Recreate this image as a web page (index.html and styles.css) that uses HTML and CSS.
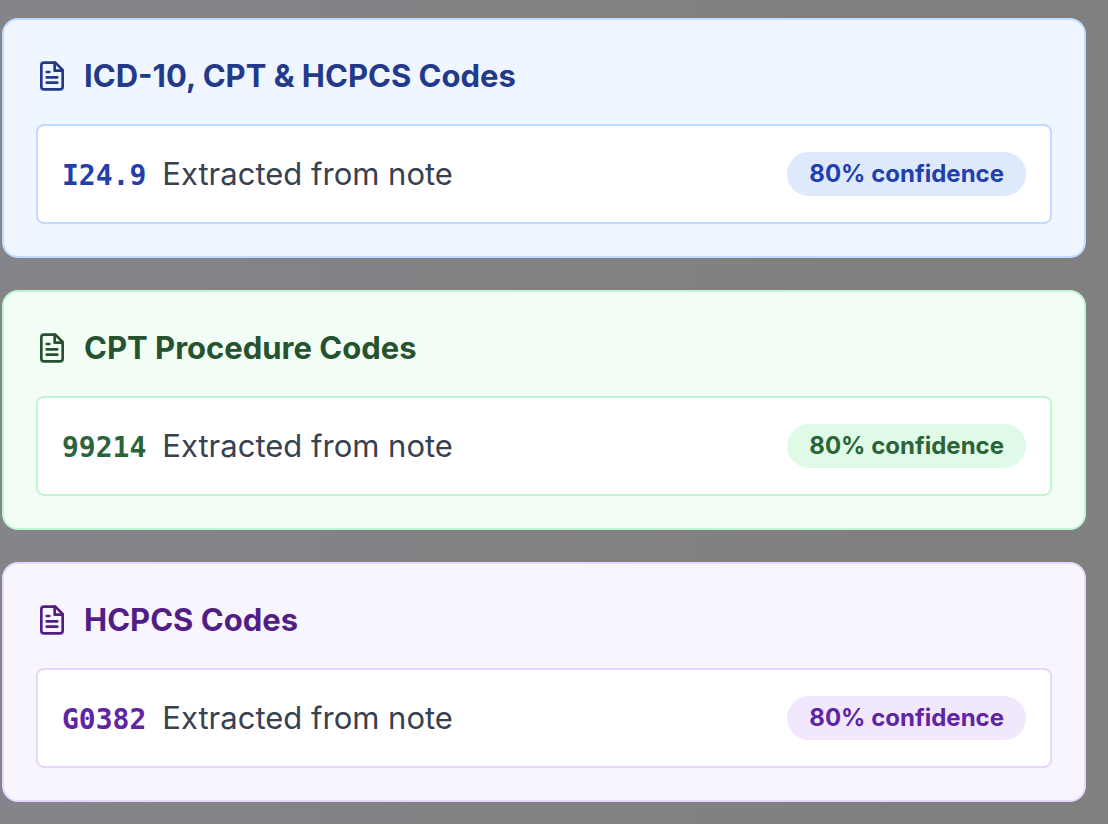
FILE: index.html
```html
<!DOCTYPE html>
<html lang="en">
<head>
<meta charset="utf-8">
<title>Medical Codes</title>
<link rel="stylesheet" href="styles.css">
</head>
<body>
<main class="codes">
  <section class="card blue">
    <h2 class="title">
      <svg class="icon" viewBox="0 0 24 24" aria-hidden="true">
        <path d="M14.5 2H6a2 2 0 0 0-2 2v16a2 2 0 0 0 2 2h12a2 2 0 0 0 2-2V7.5L14.5 2z"/>
        <path d="M14 2v6h6M10 9H8M16 13H8M16 17H8"/>
      </svg>
      ICD-10, CPT &amp; HCPCS Codes
    </h2>
    <div class="row">
      <p class="entry"><span class="code">I24.9</span><span>Extracted from note</span></p>
      <span class="badge">80% confidence</span>
    </div>
  </section>

  <section class="card green">
    <h2 class="title">
      <svg class="icon" viewBox="0 0 24 24" aria-hidden="true">
        <path d="M14.5 2H6a2 2 0 0 0-2 2v16a2 2 0 0 0 2 2h12a2 2 0 0 0 2-2V7.5L14.5 2z"/>
        <path d="M14 2v6h6M10 9H8M16 13H8M16 17H8"/>
      </svg>
      CPT Procedure Codes
    </h2>
    <div class="row">
      <p class="entry"><span class="code">99214</span><span>Extracted from note</span></p>
      <span class="badge">80% confidence</span>
    </div>
  </section>

  <section class="card purple">
    <h2 class="title">
      <svg class="icon" viewBox="0 0 24 24" aria-hidden="true">
        <path d="M14.5 2H6a2 2 0 0 0-2 2v16a2 2 0 0 0 2 2h12a2 2 0 0 0 2-2V7.5L14.5 2z"/>
        <path d="M14 2v6h6M10 9H8M16 13H8M16 17H8"/>
      </svg>
      HCPCS Codes
    </h2>
    <div class="row">
      <p class="entry"><span class="code">G0382</span><span>Extracted from note</span></p>
      <span class="badge">80% confidence</span>
    </div>
  </section>
</main>
</body>
</html>
```
FILE: styles.css
```css
* {
  box-sizing: border-box;
}

body {
  margin: 0;
  min-height: 100vh;
  background: linear-gradient(to right, #84858a, #808080 80%);
  color: #374151;
  font-family: Inter, "Liberation Sans", sans-serif;
  font-size: 31px;
  line-height: 48px;
}

.codes {
  display: flex;
  flex-direction: column;
  gap: 32px;
  padding: 18px 22px 22px 2px;
}

.card {
  padding: 32px;
  border: 2px solid var(--line);
  border-radius: 16px;
  background: var(--tint);
}

.title {
  display: flex;
  align-items: center;
  gap: 16px;
  margin: 0 0 24px;
  color: var(--dark);
  font-size: 31px;
  font-weight: 700;
}

.icon {
  width: 32px;
  height: 32px;
  flex-shrink: 0;
  fill: none;
  stroke: currentColor;
  stroke-width: 2;
  stroke-linecap: round;
  stroke-linejoin: round;
}

.row {
  display: flex;
  align-items: center;
  justify-content: space-between;
  gap: 16px;
  padding: 24px;
  border: 2px solid var(--line);
  border-radius: 8px;
  background: #fff;
}

.entry {
  display: flex;
  align-items: baseline;
  gap: 16px;
  margin: 0;
}

.code {
  color: var(--strong);
  font-family: "DejaVu Sans Mono", monospace;
  font-size: 28px;
  font-weight: 700;
  line-height: 40px;
}

.badge {
  padding: 6px 22px;
  border-radius: 22px;
  background: var(--pill);
  color: var(--strong);
  font-size: 24px;
  font-weight: 700;
  line-height: 32px;
  white-space: nowrap;
}

/* colour themes */
.blue {
  --tint: #eff6ff;
  --line: #bfdbfe;
  --pill: #dfe9fc;
  --strong: #233fae;
  --dark: #233a8a;
}

.green {
  --tint: #f2fdf5;
  --line: #c3f4d2;
  --pill: #e0fae8;
  --strong: #2c6439;
  --dark: #265230;
}

.purple {
  --tint: #f9f5ff;
  --line: #e6d7fc;
  --pill: #f1e8fd;
  --strong: #6024a4;
  --dark: #511f84;
}
```
